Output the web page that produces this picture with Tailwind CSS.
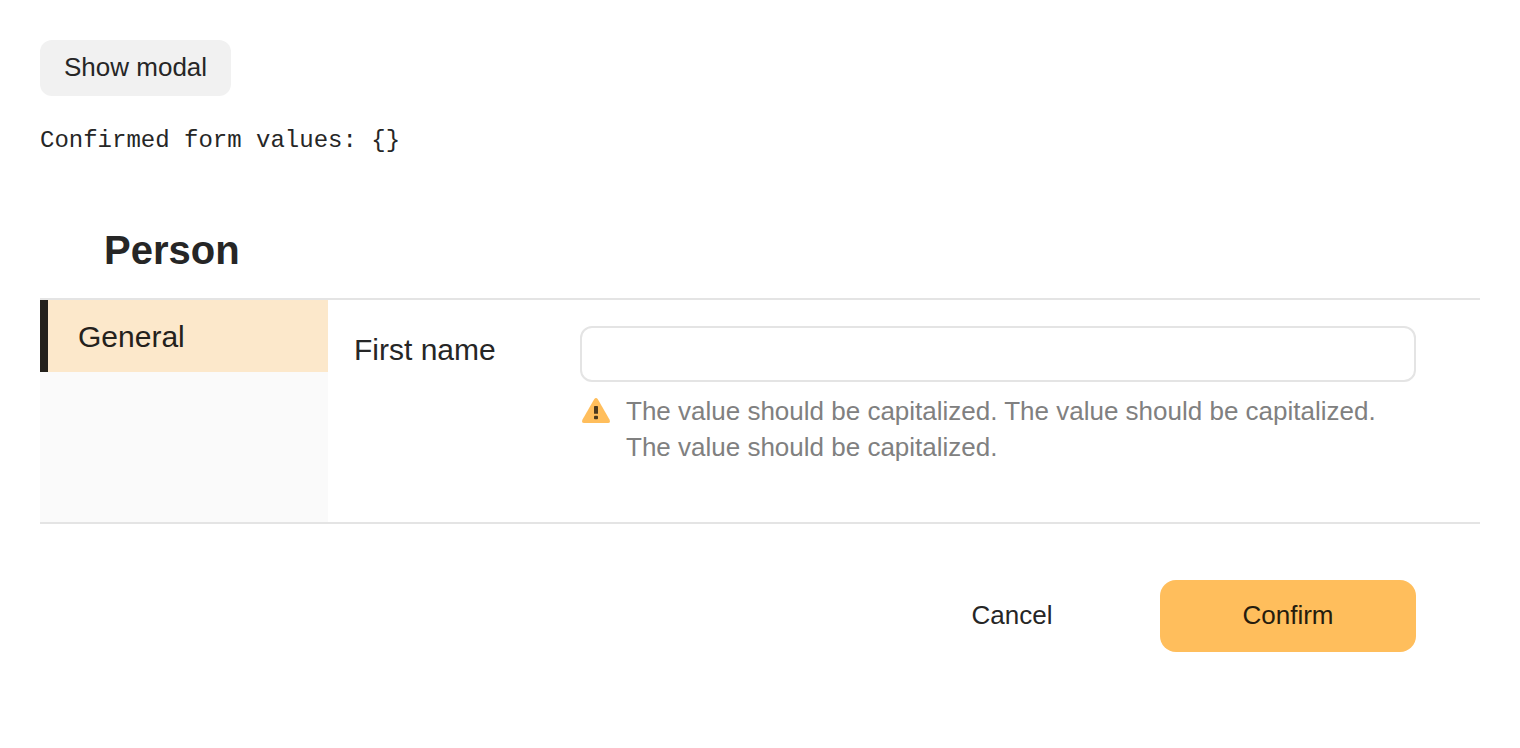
<!DOCTYPE html>
<html lang="en">
<head>
<meta charset="utf-8">
<title>Person</title>
<script src="https://cdn.jsdelivr.net/npm/@tailwindcss/browser@4"></script>
</head>
<body class="bg-white p-10 text-[#262626] antialiased font-['Liberation_Sans',Arial,sans-serif]">
<button type="button" class="block h-14 rounded-xl bg-[#f1f1f1] px-6 pb-0.5 text-[26px] leading-9">Show modal</button>
<pre class="mt-7 font-['Liberation_Mono','Courier_New',monospace] text-2xl leading-[34px]">Confirmed form values: {}</pre>
<form class="mt-16">
  <h2 class="px-16 pb-5 text-[40px] leading-14 font-bold">Person</h2>
  <div class="flex min-h-[226px] border-y-2 border-[#e4e4e4]">
    <nav class="w-72 shrink-0 bg-[#fafafa]">
      <a href="#general" class="flex h-18 items-center border-l-8 border-[#24211c] bg-[#fce8cb] pt-0.5 pl-[30px] text-[30px] leading-10 text-[#24211c]">General</a>
    </nav>
    <div id="general" class="flex flex-1 items-start pt-[26px] pr-16 pl-[26px]">
      <label for="first-name" class="w-[226px] shrink-0 pt-1 text-[30px] leading-10">First name</label>
      <div class="flex-1">
        <input id="first-name" type="text" aria-describedby="first-name-hint" class="block h-14 w-full rounded-xl border-2 border-[#e4e4e4] bg-white px-4 text-[26px]">
        <div class="mt-[11px] flex gap-3.5">
          <svg class="mt-1 h-7 w-8 shrink-0" viewBox="0 0 32 28" aria-hidden="true">
            <path d="M14.300 2Q16 0 17.700 2L29.600 22.800Q30.800 26 28 26H4Q1.200 26 2.400 22.800Z" fill="#ffbe5c"/>
            <rect x="14" y="9" width="4" height="7.800" rx=".4" fill="#4b391e"/>
            <rect x="14" y="18.800" width="4" height="3.400" rx=".9" fill="#4b391e"/>
          </svg>
          <p id="first-name-hint" class="text-[26px] leading-9 text-[#808080]">The value should be capitalized. The value should be capitalized. The value should be capitalized.</p>
        </div>
      </div>
    </div>
  </div>
  <div class="flex justify-end gap-5 px-16 pt-14">
    <button type="button" class="h-18 w-64 rounded-2xl pb-0.5 text-[26px] leading-9">Cancel</button>
    <button type="submit" class="h-18 w-64 rounded-2xl bg-[#ffbe5c] pb-0.5 text-[26px] leading-9 text-[#261c0e]">Confirm</button>
  </div>
</form>
</body>
</html>
